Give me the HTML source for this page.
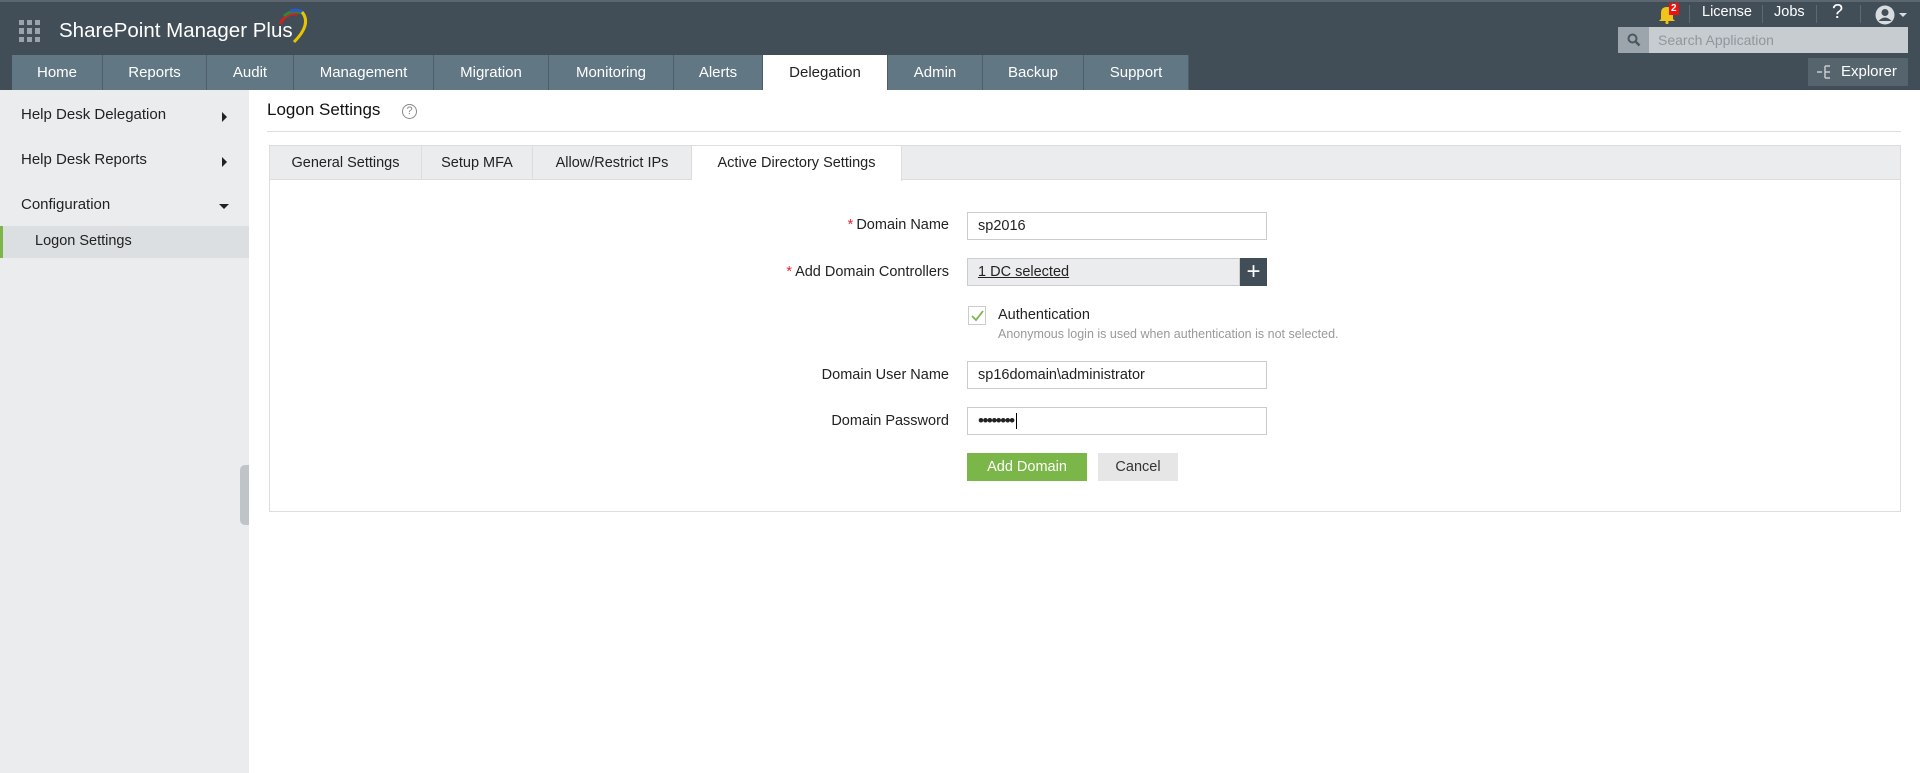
<!DOCTYPE html>
<html><head><meta charset="utf-8"><style>
*{box-sizing:border-box;margin:0;padding:0}
body{width:1920px;height:773px;overflow:hidden;font-family:"Liberation Sans",sans-serif;background:#fff;position:relative;color:#222}
.hdr{position:absolute;left:0;top:0;width:1920px;height:90px;background:#414e57;box-shadow:inset 0 2px 0 #5b666e}
.abs{position:absolute}
.nav{position:absolute;top:55px;height:35px;display:flex;left:12px}
.nav div{height:35px;line-height:35px;text-align:center;color:#fff;font-size:15px;background:#627784;border-right:1px solid #4d5e69}
.nav div.act{background:#fff;color:#222}
.side{position:absolute;left:0;top:90px;width:249px;height:683px;background:#eaeced}
.side .it{position:absolute;left:21px;font-size:15px;color:#222}
.tri{position:absolute;width:0;height:0}
.lbl{position:absolute;font-size:14.5px;color:#222;text-align:right;width:300px;left:649px}
.inp{position:absolute;left:967px;width:300px;height:28px;border:1px solid #ccc;font-size:14.5px;padding-left:10px;line-height:26px;background:#fff}
.star{color:#e23;margin-right:3px}
</style></head><body>
<div class="hdr">
 <div class="abs" style="left:19px;top:20px;width:22px;height:22px;display:grid;grid-template-columns:repeat(3,5px);gap:3px">
  <i style="background:#9aa3a9"></i><i style="background:#9aa3a9"></i><i style="background:#9aa3a9"></i><i style="background:#9aa3a9"></i><i style="background:#9aa3a9"></i><i style="background:#9aa3a9"></i><i style="background:#9aa3a9"></i><i style="background:#9aa3a9"></i><i style="background:#9aa3a9"></i></div>
 <div class="abs" style="left:59px;top:19px;color:#fff;font-size:20.5px">SharePoint Manager Plus</div>
 <svg class="abs" style="left:272px;top:8px" width="44" height="36" viewBox="0 0 44 36"><path d="M8 16 Q14 4 26 6" stroke="#c22" stroke-width="3" fill="none"/><path d="M12 8 Q20 1 30 5" stroke="#2a8a3a" stroke-width="3" fill="none"/><path d="M18 3 Q30 0 33 8" stroke="#2a5bc0" stroke-width="3" fill="none"/><path d="M30 4 Q40 16 22 34" stroke="#e8c400" stroke-width="3" fill="none"/></svg>
 <svg class="abs" style="left:1658px;top:4px" width="18" height="20" viewBox="0 0 18 20"><path d="M3 15 L3 9 Q3 3 9 3 Q15 3 15 9 L15 15 L17 17 L1 17 Z" fill="#f0c419"/><circle cx="9" cy="18.5" r="1.6" fill="#f0c419"/></svg>
 <div class="abs" style="left:1669px;top:3px;background:#e11;color:#fff;font-size:10px;font-weight:bold;padding:0 2px;line-height:12px">2</div>
 <div class="abs" style="left:1689px;top:5px;width:1px;height:18px;background:#5d6a72"></div>
 <div class="abs" style="left:1702px;top:4px;color:#fff;font-size:14.5px">License</div>
 <div class="abs" style="left:1762px;top:5px;width:1px;height:18px;background:#5d6a72"></div>
 <div class="abs" style="left:1774px;top:4px;color:#fff;font-size:14.5px">Jobs</div>
 <div class="abs" style="left:1816px;top:5px;width:1px;height:18px;background:#5d6a72"></div>
 <div class="abs" style="left:1832px;top:1px;color:#fff;font-size:20px">?</div>
 <div class="abs" style="left:1860px;top:5px;width:1px;height:18px;background:#5d6a72"></div>
 <svg class="abs" style="left:1875px;top:5px" width="34" height="20" viewBox="0 0 34 20"><circle cx="10" cy="10" r="9.5" fill="#d8dcdf"/><circle cx="10" cy="7.5" r="3.5" fill="#414e57"/><path d="M3.5 16 Q10 9 16.5 16" fill="#414e57"/><path d="M24 8 L32 8 L28 12Z" fill="#d8dcdf"/></svg>
 <div class="abs" style="left:1618px;top:27px;width:290px;height:26px;background:#c7ccd0"></div>
 <div class="abs" style="left:1618px;top:27px;width:31px;height:26px;background:#9ca5ac"></div>
 <svg class="abs" style="left:1627px;top:33px" width="14" height="14" viewBox="0 0 14 14"><circle cx="5.5" cy="5.5" r="4" stroke="#4c5860" stroke-width="2" fill="none"/><path d="M8.5 8.5 L12.5 12.5" stroke="#4c5860" stroke-width="2.5"/></svg>
 <div class="abs" style="left:1658px;top:32px;color:#8f979d;font-size:14px">Search Application</div>
 <div class="abs" style="left:1808px;top:58px;width:100px;height:28px;background:#56646d"></div>
 <svg class="abs" style="left:1816px;top:63px" width="18" height="18" viewBox="0 0 18 18" stroke="#c5cbcf" stroke-width="1.5" fill="none"><path d="M1 9 H6 M9 3 V15 M9 3 H14 M9 9 H14 M9 15 H14"/></svg>
 <div class="abs" style="left:1841px;top:63px;color:#fff;font-size:15px">Explorer</div>
 <div class="nav">
  <div style="width:91px">Home</div><div style="width:104px">Reports</div><div style="width:87px">Audit</div><div style="width:140px">Management</div><div style="width:115px">Migration</div><div style="width:125px">Monitoring</div><div style="width:89px">Alerts</div><div class="act" style="width:125px">Delegation</div><div style="width:95px">Admin</div><div style="width:101px">Backup</div><div style="width:105px">Support</div>
 </div>
</div>
<div class="side">
 <div class="it" style="top:16px">Help Desk Delegation</div>
 <div class="tri" style="left:222px;top:22px;border-left:5px solid #222;border-top:5px solid transparent;border-bottom:5px solid transparent"></div>
 <div class="it" style="top:61px">Help Desk Reports</div>
 <div class="tri" style="left:222px;top:67px;border-left:5px solid #222;border-top:5px solid transparent;border-bottom:5px solid transparent"></div>
 <div class="it" style="top:106px">Configuration</div>
 <div class="tri" style="left:219px;top:114px;border-top:5px solid #222;border-left:5px solid transparent;border-right:5px solid transparent"></div>
 <div class="abs" style="left:0;top:136px;width:249px;height:32px;background:#dcdfe1;border-left:3px solid #7ab648"></div>
 <div class="it" style="top:143px;left:35px;font-size:14.5px">Logon Settings</div>
 <div class="abs" style="left:240px;top:375px;width:9px;height:60px;background:#bfc4c8;border-radius:5px 0 0 5px"></div>
</div>
<div class="abs" style="left:267px;top:100px;font-size:17px;color:#111">Logon Settings</div>
<div class="abs" style="left:402px;top:104px;width:15px;height:15px;border:1px solid #888;border-radius:50%;font-size:11px;color:#888;text-align:center;line-height:13px">?</div>
<div class="abs" style="left:267px;top:131px;width:1634px;height:1px;background:#ddd"></div>
<div class="abs" style="left:269px;top:145px;width:1632px;height:367px;border:1px solid #ddd"></div>
<div class="abs" style="left:270px;top:146px;width:1630px;height:34px;background:#eaeced;border-bottom:1px solid #ddd"></div>
<div class="abs" style="left:270px;top:146px;height:34px;display:flex;font-size:14.5px">
 <div style="width:152px;text-align:center;line-height:34px;border-right:1px solid #ddd">General Settings</div>
 <div style="width:111px;text-align:center;line-height:34px;border-right:1px solid #ddd">Setup MFA</div>
 <div style="width:159px;text-align:center;line-height:34px;border-right:1px solid #ddd">Allow/Restrict IPs</div>
 <div style="width:210px;text-align:center;line-height:35px;background:#fff;border-right:1px solid #ddd;height:35px">Active Directory Settings</div>
</div>
<div class="lbl" style="top:217px"><span class="star">*</span>Domain Name</div>
<div class="inp" style="top:212px">sp2016</div>
<div class="lbl" style="top:264px"><span class="star">*</span>Add Domain Controllers</div>
<div class="inp" style="top:258px;background:#eaeced;width:273px;text-decoration:underline">1 DC selected</div>
<div class="abs" style="left:1240px;top:258px;width:27px;height:28px;background:#414e57;color:#fff;font-size:24px;text-align:center;line-height:27px">+</div>
<div class="abs" style="left:968px;top:306px;width:18px;height:19px;border:1px solid #ccc;background:#fff"></div>
<svg class="abs" style="left:970px;top:308px" width="15" height="15" viewBox="0 0 15 15"><path d="M2 8 L6 12 L13 3" stroke="#7ab648" stroke-width="1.8" fill="none"/></svg>
<div class="abs" style="left:998px;top:307px;font-size:14.5px">Authentication</div>
<div class="abs" style="left:998px;top:327px;font-size:12.5px;color:#999">Anonymous login is used when authentication is not selected.</div>
<div class="lbl" style="top:367px">Domain User Name</div>
<div class="inp" style="top:361px">sp16domain\administrator</div>
<div class="lbl" style="top:413px">Domain Password</div>
<div class="inp" style="top:407px;font-size:17px;letter-spacing:-1.5px">••••••••<span style="border-left:1px solid #000;margin-left:2px;font-size:14px"> </span></div>
<div class="abs" style="left:967px;top:453px;width:120px;height:28px;background:#7ab648;color:#fff;font-size:14.5px;text-align:center;line-height:28px">Add Domain</div>
<div class="abs" style="left:1098px;top:453px;width:80px;height:28px;background:#e6e6e6;color:#333;font-size:14.5px;text-align:center;line-height:28px">Cancel</div>
</body></html>
